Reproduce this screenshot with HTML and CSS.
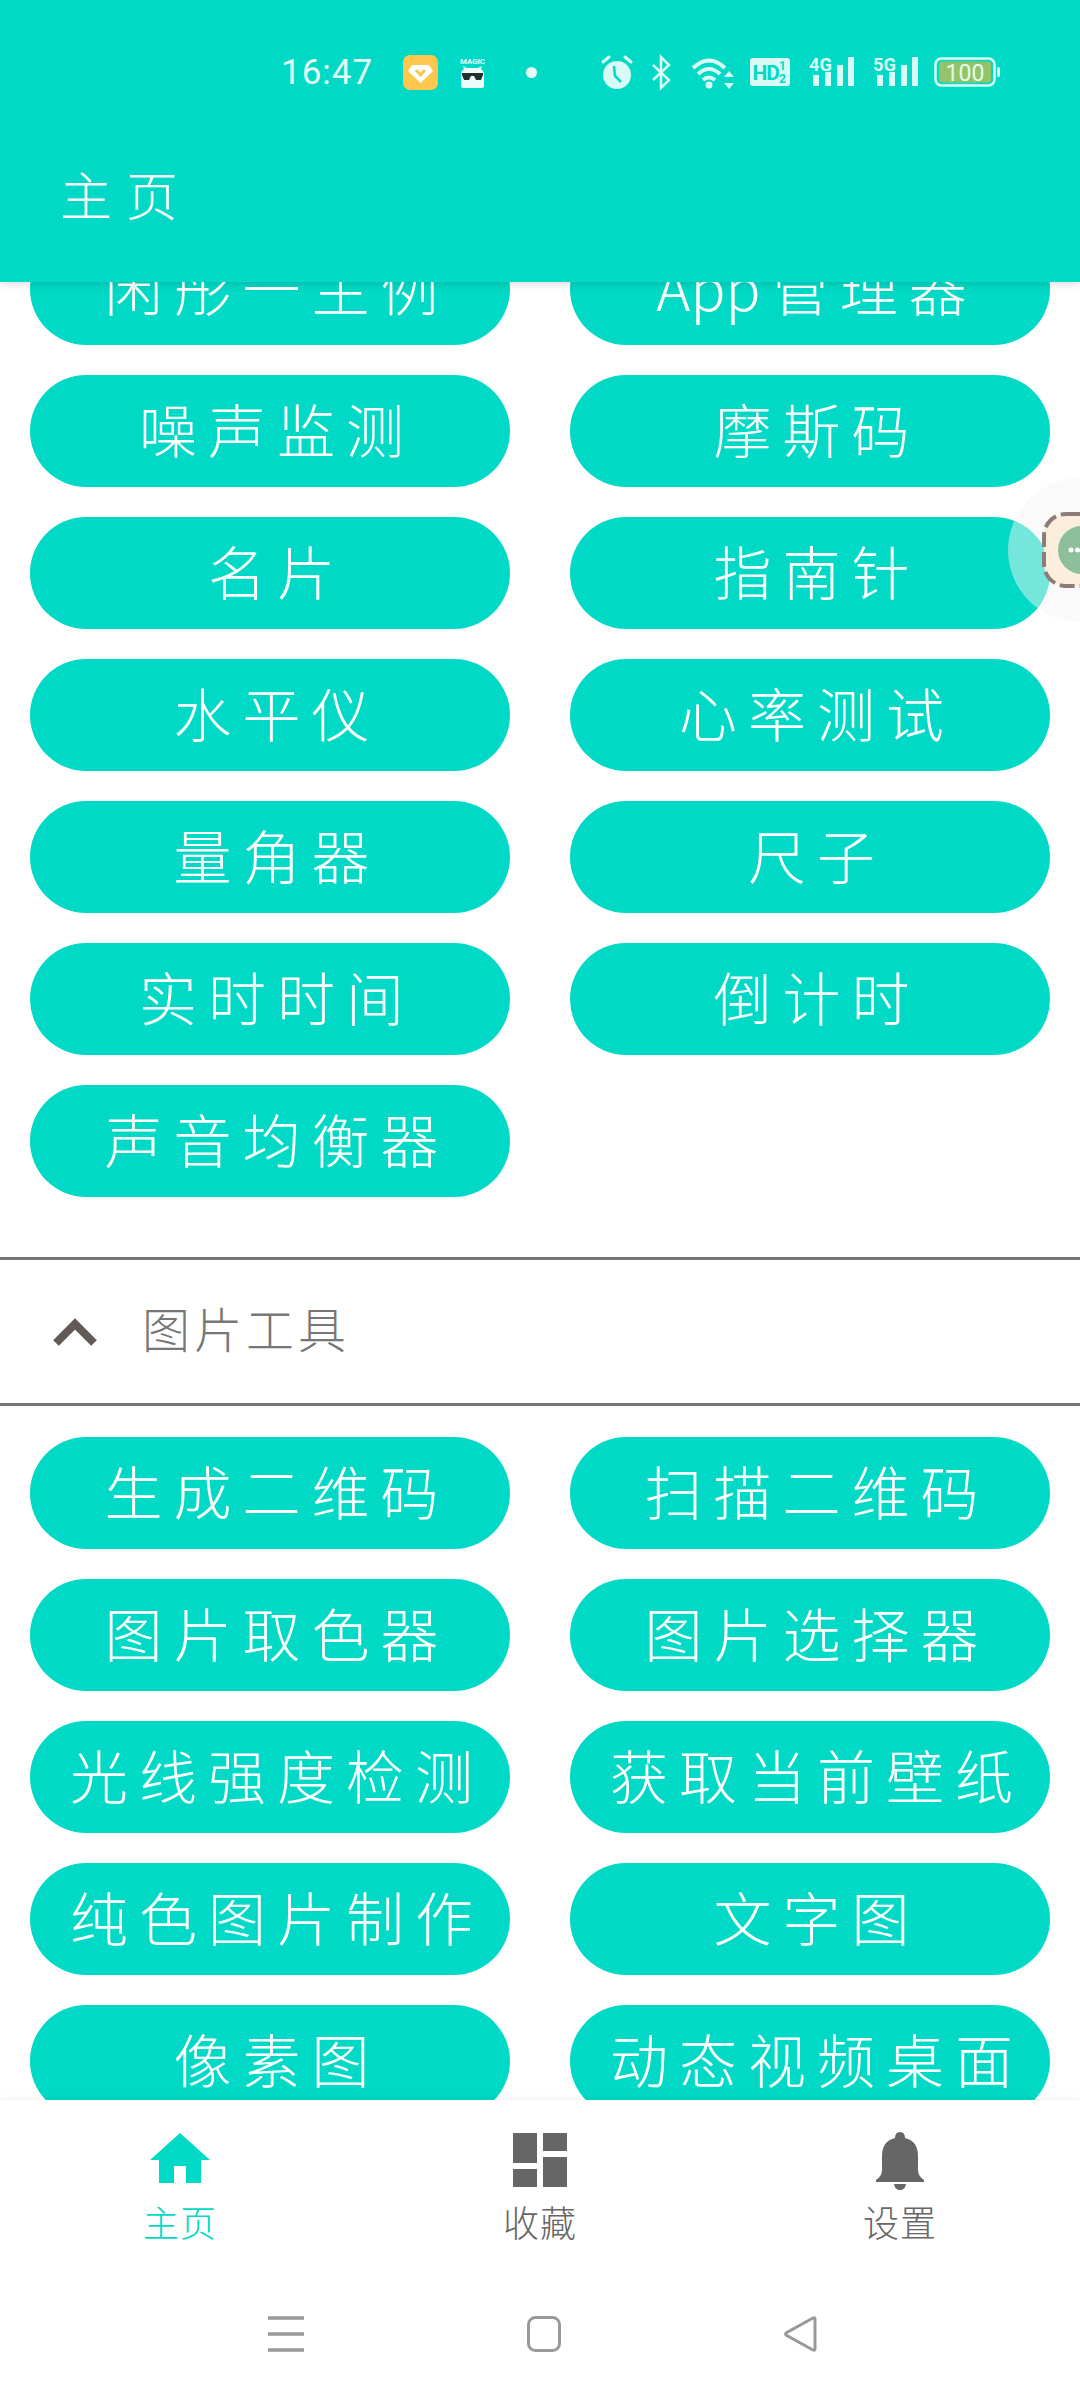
FILE: index.html
```html
<!DOCTYPE html>
<html lang="zh-CN">
<head>
<meta charset="utf-8">
<title>主页</title>
<link rel="stylesheet" href="styles.css">
</head>
<body>
<div class="app">
  <header class="appbar">
    <div class="status">
      <span class="time">16:47</span>
      <svg class="si yellow" viewBox="0 0 35 35"><rect width="35" height="35" rx="7" fill="#fcc74c"/><path d="M9 10h17l4 6-12.500 12L5 16z" fill="#fff"/><path d="M13 15l4.500 5 4.500-5" fill="none" stroke="#fcc74c" stroke-width="3"/></svg>
      <svg class="si magic" viewBox="0 0 27 32"><text x="1" y="8" textLength="25" lengthAdjust="spacingAndGlyphs" class="magictext">MAGIC</text><path d="M4 32q-2 0-2-2V19q0-4 3-6l-1-3 4 2h11l4-2-1 3q3 2 3 6v11q0 2-2 2z" fill="#eafdfb"/><path d="M3 17h21v2l-2 5h-5l-2-4h-3l-2 4H5l-2-5z" fill="#27302f"/></svg>
      <span class="dot"></span>
      <svg class="si alarm" viewBox="0 0 32 33"><circle cx="16" cy="19" r="14" fill="#d8fbf6"/><path d="M2 6l6-5M30 6l-6-5" stroke="#d8fbf6" stroke-width="3" stroke-linecap="round"/><path d="M13 10l1 10 6 6" fill="none" stroke="#00d9c5" stroke-width="2.500"/></svg>
      <svg class="si bt" viewBox="0 0 21 33"><path d="M2 9l16 15-8 8V1l8 8L2 24" fill="none" stroke="#d8fbf6" stroke-width="2.500"/></svg>
      <svg class="si wifi" viewBox="0 0 44 33"><path d="M2 12q16-15 32 0M7 18q11-10 22 0M12 24q6-5 12 0" fill="none" stroke="#d8fbf6" stroke-width="4"/><circle cx="18" cy="29" r="3.500" fill="#d8fbf6"/><path d="M38 15l5 6H33zM38 33l5-6H33z" fill="#d8fbf6"/></svg>
      <svg class="si hd" viewBox="0 0 40 28"><rect width="40" height="28" rx="3" fill="#d8fbf6"/><text x="2.500" y="22" class="hdtext">HD</text><text x="29" y="12" class="hdsmall">1</text><text x="29" y="25" class="hdsmall">2</text></svg>
      <svg class="si sig" viewBox="0 0 46 32"><text x="0" y="15" textLength="23" lengthAdjust="spacingAndGlyphs" class="gtext">4G</text><path d="M4 19h6v11H4zM16 16h6v14h-6zM28 9h6v21h-6zM39 1h6v29h-6z" fill="#d8fbf6"/></svg>
      <svg class="si sig2" viewBox="0 0 46 32"><text x="0" y="15" textLength="23" lengthAdjust="spacingAndGlyphs" class="gtext">5G</text><path d="M4 19h6v11H4zM16 16h6v14h-6zM28 9h6v21h-6zM39 1h6v29h-6z" fill="#d8fbf6"/></svg>
      <svg class="si bat" viewBox="0 0 66 30"><rect x="1.500" y="1.500" width="59" height="27" rx="6" fill="none" stroke="#d8fbf6" stroke-width="2.500"/><rect x="5" y="4.500" width="52" height="21" rx="3" fill="#93c46a"/><rect x="63" y="10" width="3" height="10" rx="1.500" fill="#d8fbf6"/><text x="31" y="23.500" text-anchor="middle" class="battext">100</text></svg>
    </div>
    <h1 class="title">主页</h1>
  </header>

  <main class="scroll">
    <div class="scroll-inner">
      <section class="grid first">
        <a class="btn">闲彤一主例</a><a class="btn"><span class="latin">App</span>管理器</a>
        <a class="btn">噪声监测</a><a class="btn">摩斯码</a>
        <a class="btn">名片</a><a class="btn">指南针</a>
        <a class="btn">水平仪</a><a class="btn">心率测试</a>
        <a class="btn">量角器</a><a class="btn">尺子</a>
        <a class="btn">实时时间</a><a class="btn">倒计时</a>
        <a class="btn">声音均衡器</a>
      </section>
      <div class="section-head">
        <svg class="chev" viewBox="0 0 44 28"><path d="M3 25L22 6l19 19" fill="none" stroke="#635a58" stroke-width="8"/></svg>
        <span class="section-title">图片工具</span>
      </div>
      <section class="grid">
        <a class="btn">生成二维码</a><a class="btn">扫描二维码</a>
        <a class="btn">图片取色器</a><a class="btn">图片选择器</a>
        <a class="btn">光线强度检测</a><a class="btn">获取当前壁纸</a>
        <a class="btn">纯色图片制作</a><a class="btn">文字图</a>
        <a class="btn">像素图</a><a class="btn">动态视频桌面</a>
      </section>
    </div>
  </main>

  <nav class="bottom">
    <div class="tabs">
      <div class="tab active">
        <svg class="tabicon" viewBox="0 0 60 58"><path d="M30 1l30 27H51v23H36V34H24v17H9V28H0z" fill="#00d9c5"/></svg>
        <span class="tablabel">主页</span>
      </div>
      <div class="tab">
        <svg class="tabicon" viewBox="0 0 60 58"><path d="M3 1h24v30H3zM33 1h24v18H33zM33 25h24v30H33zM3 37h24v18H3z" fill="#666"/></svg>
        <span class="tablabel">收藏</span>
      </div>
      <div class="tab">
        <svg class="tabicon" viewBox="0 0 60 58"><path d="M30 0q5 0 5 6 13 3 13 18v14q0 6 6 10v2H6v-2q6-4 6-10V24Q12 9 25 6q0-6 5-6z" fill="#666"/><path d="M24 52h12q-1 6-6 6t-6-6z" fill="#666"/></svg>
        <span class="tablabel">设置</span>
      </div>
    </div>
    <div class="sysnav">
      <svg class="sys-menu" viewBox="0 0 36 36"><path d="M0 2h36M0 18h36M0 34h36" stroke="#999" stroke-width="3.500"/></svg>
      <svg class="sys-home" viewBox="0 0 34 36"><rect x="1.500" y="1.500" width="31" height="33" rx="7" fill="none" stroke="#999" stroke-width="3"/></svg>
      <svg class="sys-back" viewBox="0 0 33 36"><path d="M31 3q0-2-2-1L2 17q-1 1 0 2l27 15q2 1 2-1z" fill="none" stroke="#999" stroke-width="3"/></svg>
    </div>
  </nav>

  <svg class="floater" viewBox="0 0 72 144">
    <circle cx="72" cy="72" r="72" fill="rgba(245,245,245,.48)"/>
    <rect x="36" y="36" width="80" height="72" rx="22" fill="#fbeedd" stroke="#8d7d78" stroke-width="4" stroke-dasharray="15 5"/>
    <circle cx="74" cy="72" r="24" fill="#8dbf9a"/>
    <circle cx="63" cy="72" r="2.500" fill="#fff"/><circle cx="69.500" cy="72" r="2.500" fill="#fff"/>
  </svg>
</div>
</body>
</html>
```

FILE: styles.css
```css
* { box-sizing: border-box; }
html, body { margin: 0; padding: 0; background: #fff; }
.app {
  position: relative;
  width: 1080px;
  height: 2400px;
  display: flex;
  flex-direction: column;
  overflow: hidden;
  font-family: "Noto Sans CJK SC", "Noto Sans", sans-serif;
  font-weight: 300;
}
.appbar {
  flex: 0 0 282px;
  background: #00d9c5;
  box-shadow: 0 2px 8px rgba(0,0,0,.14);
  z-index: 2;
}
.status {
  height: 114px;
  padding: 30px 0 0 281px;
  display: flex;
  align-items: center;
}
.time {
  width: 93px;
  font-family: Roboto, sans-serif;
  font-size: 35px;
  font-weight: 400;
  letter-spacing: 1px;
  color: #e4fbf8;
  white-space: nowrap;
}
.si { display: block; flex: none; overflow: visible; }
.yellow { width: 35px; height: 35px; margin-left: 29px; }
.magic { width: 27px; height: 32px; margin-left: 21px; }
.dot { width: 11px; height: 11px; margin-left: 40px; border-radius: 50%; background: #e4fbf8; flex: none; }
.alarm { width: 32px; height: 33px; margin-left: 64px; }
.bt { width: 21px; height: 33px; margin-left: 18px; }
.wifi { width: 44px; height: 33px; margin-left: 19px; }
.hd { width: 40px; height: 28px; margin-left: 15px; }
.sig { width: 46px; height: 32px; margin-left: 19px; }
.sig2 { width: 46px; height: 32px; margin-left: 18px; }
.bat { width: 66px; height: 30px; margin-left: 15px; }
.magictext { font: 700 8px Roboto, sans-serif; fill: #eafdfb; }
.hdtext { font: 700 21px "Roboto", sans-serif; fill: #00d9c5; letter-spacing: -1px; }
.hdsmall { font: 700 12px "Roboto", sans-serif; fill: #00d9c5; }
.gtext { font: 700 19px "Roboto", sans-serif; fill: #d8fbf6; }
.battext { font: 400 23px "Roboto", sans-serif; fill: #e4fbe8; }
.title {
  margin: 0;
  padding-left: 60px;
  height: 168px;
  line-height: 160px;
  font-size: 52px;
  font-weight: 300;
  letter-spacing: 14px;
  color: #fff;
}
.scroll { flex: 1 1 auto; min-height: 0; overflow: hidden; }
.scroll-inner { margin-top: -49px; }
.grid {
  display: grid;
  grid-template-columns: 480px 480px;
  gap: 30px 60px;
  padding: 31px 30px 0;
}
.grid.first { padding-top: 0; }
.btn {
  display: flex;
  align-items: center;
  justify-content: center;
  height: 112px;
  padding: 0 0 6px 14px;
  border-radius: 56px;
  background: #00d9c5;
  color: #fff;
  font-size: 58px;
  letter-spacing: 11px;
  line-height: 1;
  white-space: nowrap;
}
.latin { letter-spacing: 0; margin-right: 10px; }
.section-head {
  height: 149px;
  margin-top: 60px;
  padding: 0 0 4px 53px;
  display: flex;
  align-items: center;
  border-top: 3px solid #777;
  border-bottom: 3px solid #777;
}
.chev { width: 44px; height: 28px; margin-top: 4px; }
.section-title {
  margin-left: 45px;
  font-size: 48px;
  line-height: 1;
  letter-spacing: 4px;
  color: #777;
  padding-bottom: 6px;
}
.bottom {
  flex: 0 0 300px;
  background: #fff;
  box-shadow: 0 -2px 6px rgba(0,0,0,.05);
  z-index: 2;
  display: flex;
  flex-direction: column;
}
.tabs { display: flex; height: 216px; padding-top: 32px; }
.tab {
  flex: 1 1 0;
  display: flex;
  flex-direction: column;
  align-items: center;
  color: #666;
}
.tab.active { color: #00d9c5; }
.tabicon { width: 60px; height: 58px; display: block; }
.tablabel {
  margin-top: 11px;
  font-size: 36px;
  line-height: 40px;
  letter-spacing: 1px;
}
.sysnav {
  display: flex;
  justify-content: center;
  align-items: center;
  gap: 223px;
  padding-left: 5px;
}
.sys-menu { width: 36px; height: 36px; }
.sys-home { width: 34px; height: 36px; }
.sys-back { width: 33px; height: 36px; }
.floater {
  position: absolute;
  left: 1008px;
  top: 478px;
  width: 72px;
  height: 144px;
  z-index: 3;
}
```
